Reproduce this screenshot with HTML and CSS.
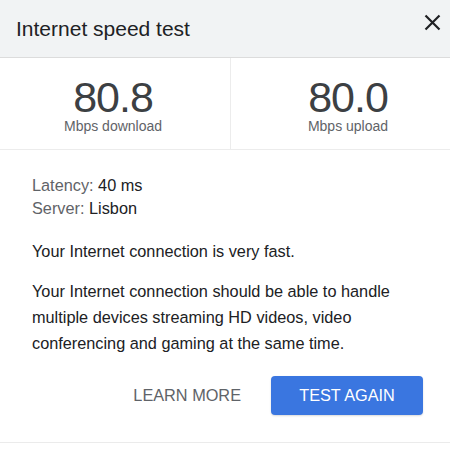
FILE: index.html
```html
<!DOCTYPE html>
<html lang="en">
<head>
<meta charset="utf-8">
<title>Internet speed test</title>
<link rel="stylesheet" href="styles.css">
</head>
<body>
<div class="card">
  <header class="head">
    <h1 class="title">Internet speed test</h1>
    <button class="close" aria-label="Close">
      <svg width="17" height="17" viewBox="0 0 17 17"><path d="M1.5 1.5 L15.5 15.5 M15.5 1.5 L1.5 15.5" stroke="#202124" stroke-width="2.2" fill="none"/></svg>
    </button>
  </header>
  <section class="stats">
    <div class="stat">
      <div class="num">80.8</div>
      <div class="unit">Mbps download</div>
    </div>
    <div class="stat">
      <div class="num">80.0</div>
      <div class="unit">Mbps upload</div>
    </div>
  </section>
  <section class="body">
    <div class="meta">
      <div><span class="lbl">Latency:</span> 40 ms</div>
      <div><span class="lbl">Server:</span> Lisbon</div>
    </div>
    <p class="p1">Your Internet connection is very fast.</p>
    <p class="p2">Your Internet connection should be able to handle multiple devices streaming HD videos, video conferencing and gaming at the same time.</p>
    <div class="actions">
      <button class="learn">LEARN MORE</button>
      <button class="again">TEST AGAIN</button>
    </div>
  </section>
</div>
</body>
</html>
```
FILE: styles.css
```css
html, body {
  margin: 0;
  padding: 0;
  overflow: hidden;
  background: #fff;
}
body {
  font-family: Arial, "Liberation Sans", Helvetica, sans-serif;
  color: #202124;
}
.card {
  width: 470px;
  margin-left: -4px;
  height: 442px;
  border-bottom: 1px solid #ebebeb;
}
.head {
  background: #f1f3f4;
  border-bottom: 1px solid #dcdcdc;
  display: flex;
  align-items: flex-start;
  justify-content: space-between;
  box-sizing: border-box;
  height: 58px;
}
.title {
  margin: 0;
  padding: 17px 0 0 20px;
  font-weight: 400;
  font-size: 21px;
  line-height: 24px;
  color: #202124;
}
.close {
  border: 0;
  background: none;
  padding: 0;
  margin: 14px 25px 0 0;
  width: 17px;
  height: 17px;
  display: flex;
}
.stats {
  display: grid;
  grid-template-columns: 234px 235px;
  height: 91px;
  border-bottom: 1px solid #ececec;
}
.stat {
  display: flex;
  flex-direction: column;
  align-items: center;
  padding-top: 19px;
}
.stat + .stat {
  border-left: 1px solid #ececec;
}
.num {
  font-size: 43px;
  line-height: 40px;
  color: #3c4043;
  letter-spacing: -1px;
}
.unit {
  font-size: 14px;
  line-height: 16px;
  color: #5f6368;
  margin-top: 1px;
}
.body {
  padding: 24px 0 0 36px;
}
.meta {
  font-size: 16.3px;
  line-height: 23px;
  color: #202124;
}
.lbl {
  color: #5f6368;
}
.p1, .p2 {
  margin: 0;
  font-size: 16.3px;
  color: #202124;
}
.p1 {
  margin-top: 19px;
  line-height: 24px;
}
.p2 {
  margin-top: 15px;
  line-height: 26px;
  width: 375px;
}
.actions {
  display: flex;
  justify-content: flex-end;
  align-items: center;
  gap: 30px;
  width: 391px;
  margin-top: 20px;
}
.learn, .again {
  font-family: inherit;
  font-size: 16.3px;
  border: 0;
  cursor: pointer;
}
.learn {
  background: none;
  color: #5f6368;
  padding: 0;
}
.again {
  background: #3a76e0;
  color: #fff;
  width: 152px;
  height: 39px;
  border-radius: 4px;
  box-shadow: 0 1px 2px rgba(0,0,0,0.15);
}
```
